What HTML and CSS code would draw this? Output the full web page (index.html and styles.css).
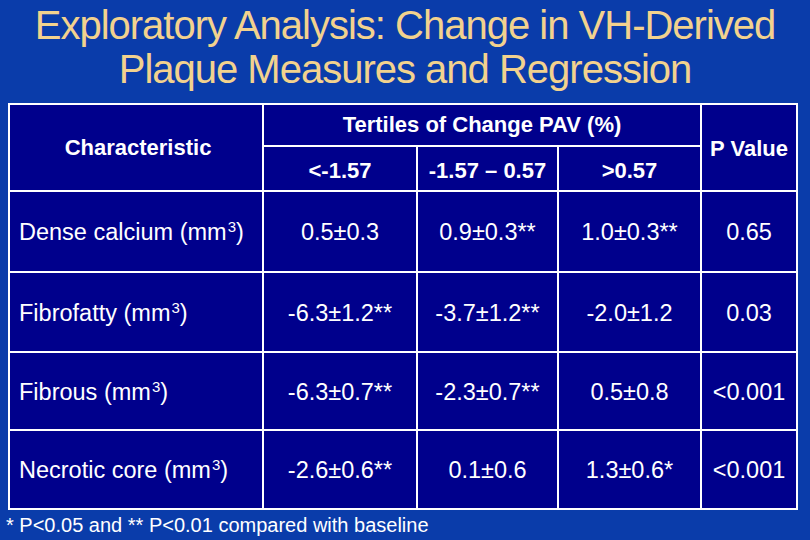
FILE: index.html
```html
<!DOCTYPE html>
<html>
<head>
<meta charset="utf-8">
<link rel="stylesheet" href="styles.css">
</head>
<body>
<div class="slide">
  <h1 class="title">Exploratory Analysis: Change in VH-Derived<br>Plaque Measures and Regression</h1>
  <div class="grid">
    <div class="cell head char">Characteristic</div>
    <div class="cell head tert">Tertiles of Change PAV (%)</div>
    <div class="cell head pval">P Value</div>
    <div class="cell sub">&lt;-1.57</div>
    <div class="cell sub">-1.57 – 0.57</div>
    <div class="cell sub">&gt;0.57</div>

    <div class="cell label"><span>Dense calcium (mm<sup>3</sup>)</span></div>
    <div class="cell val">0.5±0.3</div>
    <div class="cell val">0.9±0.3**</div>
    <div class="cell val">1.0±0.3**</div>
    <div class="cell val">0.65</div>

    <div class="cell label"><span>Fibrofatty (mm<sup>3</sup>)</span></div>
    <div class="cell val">-6.3±1.2**</div>
    <div class="cell val">-3.7±1.2**</div>
    <div class="cell val">-2.0±1.2</div>
    <div class="cell val">0.03</div>

    <div class="cell label"><span>Fibrous (mm<sup>3</sup>)</span></div>
    <div class="cell val">-6.3±0.7**</div>
    <div class="cell val">-2.3±0.7**</div>
    <div class="cell val">0.5±0.8</div>
    <div class="cell val">&lt;0.001</div>

    <div class="cell label"><span>Necrotic core (mm<sup>3</sup>)</span></div>
    <div class="cell val">-2.6±0.6**</div>
    <div class="cell val">0.1±0.6</div>
    <div class="cell val">1.3±0.6*</div>
    <div class="cell val">&lt;0.001</div>
  </div>
  <p class="note">* P&lt;0.05 and ** P&lt;0.01 compared with baseline</p>
</div>
</body>
</html>
```

FILE: styles.css
```css
html, body {
  margin: 0;
  padding: 0;
  background: #0a3caa;
}
.slide {
  width: 810px;
  height: 540px;
  background: #0a3caa;
  font-family: "Liberation Sans", Arial, sans-serif;
  color: #ffffff;
  overflow: hidden;
}
.title {
  margin: 0;
  padding-top: 3px;
  height: 88px;
  font-size: 40px;
  line-height: 44px;
  font-weight: normal;
  letter-spacing: -1px;
  text-align: center;
  color: #f2d28e;
}
.grid {
  margin: 12px 0 0 8px;
  width: 790px;
  box-sizing: border-box;
  padding: 2px;
  background: #ffffff;
  display: grid;
  grid-template-columns: 252px 152px 139px 141px 94px;
  grid-template-rows: 40px 43px 79px 78px 76px 77px;
  gap: 2px;
}
.cell {
  background: #00008c;
  display: flex;
  align-items: center;
  justify-content: center;
  font-size: 23.5px;
}
.val, .label {
  padding-top: 2px;
}
.head, .sub {
  font-weight: bold;
  font-size: 22px;
}
.char {
  grid-row: 1 / 3;
  padding-left: 4px;
}
.tert {
  grid-column: 2 / 5;
}
.pval {
  grid-column: 5;
  grid-row: 1 / 3;
  padding-top: 2px;
}
.sub {
  padding-top: 4px;
}
.label {
  justify-content: flex-start;
  padding-left: 9px;
}
.label sup {
  font-size: 15px;
  line-height: 0;
  vertical-align: 8px;
  margin-left: 1px;
}
.note {
  margin: 3px 0 0 6px;
  font-size: 20px;
  line-height: 24px;
}
```
